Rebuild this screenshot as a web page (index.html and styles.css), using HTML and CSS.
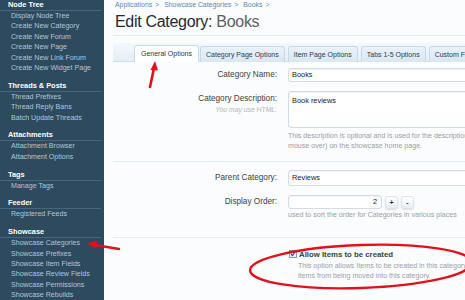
FILE: index.html
```html
<!DOCTYPE html>
<html>
<head>
<meta charset="utf-8">
<link rel="stylesheet" href="styles.css">
</head>
<body>
<div class="page">
  <nav class="sidebar">
    <div class="sec first">
      <div class="sh">Node Tree</div>
      <ul>
        <li>Display Node Tree</li>
        <li>Create New Category</li>
        <li>Create New Forum</li>
        <li>Create New Page</li>
        <li>Create New Link Forum</li>
        <li>Create New Widget Page</li>
      </ul>
    </div>
    <div class="sec">
      <div class="sh">Threads &amp; Posts</div>
      <ul>
        <li>Thread Prefixes</li>
        <li>Thread Reply Bans</li>
        <li>Batch Update Threads</li>
      </ul>
    </div>
    <div class="sec">
      <div class="sh">Attachments</div>
      <ul>
        <li>Attachment Browser</li>
        <li>Attachment Options</li>
      </ul>
    </div>
    <div class="sec">
      <div class="sh">Tags</div>
      <ul>
        <li>Manage Tags</li>
      </ul>
    </div>
    <div class="sec">
      <div class="sh">Feeder</div>
      <ul>
        <li>Registered Feeds</li>
      </ul>
    </div>
    <div class="sec">
      <div class="sh">Showcase</div>
      <ul>
        <li>Showcase Categories</li>
        <li>Showcase Prefixes</li>
        <li>Showcase Item Fields</li>
        <li>Showcase Review Fields</li>
        <li>Showcase Permissions</li>
        <li>Showcase Rebuilds</li>
      </ul>
    </div>
  </nav>

  <main class="main">
    <div class="crumbs"><span>Applications</span><i>&gt;</i><span>Showcase Categories</span><i>&gt;</i><span>Books</span><i>&gt;</i></div>
    <h1 class="title">Edit Category: <span class="tname">Books</span></h1>

    <div class="tabs">
      <div class="tab active">General Options</div>
      <div class="tab">Category Page Options</div>
      <div class="tab">Item Page Options</div>
      <div class="tab">Tabs 1-5 Options</div>
      <div class="tab">Custom Field Options</div>
    </div>

    <div class="form">
      <div class="row r-name">
        <div class="lbl">Category Name:</div>
        <div class="ctrl"><div class="input">Books</div></div>
      </div>
      <div class="row r-desc">
        <div class="lbl">Category Description:<div class="sub">You may use HTML.</div></div>
        <div class="ctrl">
          <div class="input area">Book reviews</div>
          <p class="hint wide">This description is optional and is used for the description (shown on mouse over) on the showcase home page.</p>
        </div>
      </div>
      <div class="sep"></div>
      <div class="row r-parent">
        <div class="lbl">Parent Category:</div>
        <div class="ctrl"><div class="input select">Reviews</div></div>
      </div>
      <div class="row r-order">
        <div class="lbl">Display Order:</div>
        <div class="ctrl">
          <div class="spin"><div class="input num">2</div><div class="btn">+</div><div class="btn">-</div></div>
          <p class="hint nowrap">used to sort the order for Categories in various places</p>
        </div>
      </div>
      <div class="sep sep2"></div>
      <div class="row r-check">
        <div class="lbl"></div>
        <div class="ctrl">
          <div class="check"><span class="cb"><svg width="8" height="8" viewBox="0 0 8 8"><path d="M1.3 4.2 L3.2 6.2 L6.8 1.4" fill="none" stroke="#2b3f8f" stroke-width="1.4"/></svg></span><span class="cl">Allow Items to be created</span></div>
          <p class="hint ind">This option allows Items to be created in this category. Disabling this prevents items from being moved into this category.</p>
        </div>
      </div>
    </div>
  </main>

  <svg class="marks" width="465" height="300" viewBox="0 0 465 300">
    <line x1="150" y1="87" x2="154" y2="68" stroke="#e3101c" stroke-width="2.6" stroke-linecap="round"/>
    <polygon points="155,61 150.5,70 158,70.5" fill="#e3101c"/>
    <line x1="119" y1="249" x2="95" y2="245" stroke="#e3101c" stroke-width="2.4" stroke-linecap="round"/>
    <polygon points="87,243.5 97,240.5 96,248.5" fill="#e3101c"/>
    <ellipse cx="361" cy="266.5" rx="111" ry="21.5" transform="rotate(-2 361 266.5)" fill="none" stroke="#e3101c" stroke-width="2.4"/>
  </svg>
</div>
</body>
</html>
```

FILE: styles.css
```css
* { box-sizing: border-box; }
html, body { margin: 0; padding: 0; }
body {
  width: 465px;
  height: 300px;
  overflow: hidden;
  font-family: "Liberation Sans", Arial, sans-serif;
  background: #fbfcfd;
}
.page {
  position: relative;
  display: flex;
  width: 465px;
  height: 300px;
  overflow: hidden;
}

/* sidebar */
.sidebar {
  width: 104px;
  flex: none;
  background: #2e4a5e;
  padding-right: 3px;
}
.sec { margin-top: 7.4px; }
.sec.first { margin-top: 0; }
.sh {
  font-size: 7.4px;
  font-weight: bold;
  color: #ffffff;
  line-height: 10px;
  padding-left: 8px;
  border-bottom: 1px solid #48677d;
}
.sidebar ul {
  list-style: none;
  margin: 0;
  padding: 0 0 0 11px;
}
.sidebar li {
  font-size: 7.1px;
  line-height: 10.4px;
  color: #b2c6d8;
  white-space: nowrap;
}

/* main */
.main {
  flex: 1;
  min-width: 0;
  padding-left: 9px;
  background: #fbfcfd;
  overflow: hidden;
}
.crumbs {
  padding-left: 2px;
  font-size: 6.9px;
  line-height: 10px;
  color: #5f86b3;
  white-space: nowrap;
}
.crumbs i {
  font-style: normal;
  color: #6d8fb6;
  margin: 0 5px 0 3px;
}
.title {
  margin: 2px 0 0 0;
  padding: 0 0 3px 2px;
  font-size: 16px;
  line-height: 20px;
  font-weight: normal;
  color: #1f2a33;
  letter-spacing: -0.3px;
  border-bottom: 1px solid #e3edf5;
  white-space: nowrap;
}
.tname { color: #5b5f63; }

.tabs {
  margin-top: 7px;
  height: 19px;
  display: flex;
  align-items: flex-end;
  padding-left: 21px;
  background: linear-gradient(#f4f8fb, #e4eef6);
  border-bottom: 1px solid #cfe0ec;
  white-space: nowrap;
}
.tab {
  flex: none;
  height: 16px;
  line-height: 15px;
  padding: 0 5px;
  margin-right: 3px;
  font-size: 7px;
  color: #2c3c4c;
  background: linear-gradient(#e9f2f9, #d9e7f2);
  border: 1px solid #c6d9e8;
  border-bottom: none;
  border-radius: 3px 3px 0 0;
  margin-bottom: -1px;
}
.tab.active {
  height: 17px;
  padding: 0 6px;
  background: #fdfeff;
  border-color: #c6d9e8;
  margin-right: 1px;
}

/* form */
.form { padding-top: 6px; }
.row {
  display: grid;
  grid-template-columns: 165px 200px;
  column-gap: 10px;
}
.lbl {
  text-align: right;
  font-size: 8.2px;
  color: #3a3f44;
  padding-right: 1px;
  white-space: nowrap;
}
.sub {
  font-size: 6.8px;
  font-style: italic;
  color: #b0b4b8;
  line-height: 9px;
  margin-top: 1px;
}
.input {
  background: #ffffff;
  border: 1px solid #d3dbe3;
  border-radius: 3px;
  box-shadow: inset 0 1px 2px rgba(0,0,0,0.06);
  font-size: 7.4px;
  color: #222;
  padding: 0 3px;
  white-space: nowrap;
}
.r-name .input { height: 14px; line-height: 12px; }
.r-name .lbl { line-height: 14px; }

.r-desc { margin-top: 9px; }
.r-desc .lbl { padding-top: 3px; line-height: 10px; }
.input.area { height: 37px; line-height: 9px; padding-top: 4px; }
.hint {
  margin: 3px 0 0 0;
  font-size: 7.1px;
  line-height: 10px;
  color: #9aa0a6;
}
.hint.wide { width: 222px; }
.hint.nowrap { white-space: nowrap; margin-top: 1px; }

.sep {
  margin: 10px 0 0 0;
  height: 1px;
  background: #e3edf5;
}
.r-parent { margin-top: 8px; }
.input.select { height: 16px; line-height: 14px; }
.r-parent .lbl { line-height: 16px; }

.r-order { margin-top: 9px; }
.r-order .lbl { line-height: 14px; }
.spin { display: flex; align-items: center; }
.input.num { width: 94px; height: 14px; line-height: 12px; text-align: right; padding-right: 4px; }
.btn {
  width: 13px;
  height: 13px;
  margin-left: 3px;
  border: 1px solid #dde3ea;
  border-radius: 3px;
  background: linear-gradient(#ffffff, #e8edf2);
  box-shadow: 0 1px 2px rgba(0,0,0,0.12);
  font-size: 7px;
  line-height: 11px;
  text-align: center;
  color: #333;
  font-weight: bold;
}
.btn + .btn { margin-left: 3px; }
.sep2 { margin-top: 17px; }

.r-check { margin-top: 10px; }
.check { display: flex; align-items: center; height: 12px; padding-left: 1px; }
.cb {
  width: 8px;
  height: 8px;
  border: 1px solid #8a9cb5;
  background: #eef2f8;
  display: flex;
  align-items: center;
  justify-content: center;
  margin-right: 2px;
}
.cb svg { display: block; }
.cl {
  font-size: 7.8px;
  font-weight: bold;
  color: #3a3f44;
  white-space: nowrap;
}
.hint.ind { margin: 1px 0 0 10px; width: 256px; }

.marks {
  position: absolute;
  left: 0;
  top: 0;
  pointer-events: none;
}
```
